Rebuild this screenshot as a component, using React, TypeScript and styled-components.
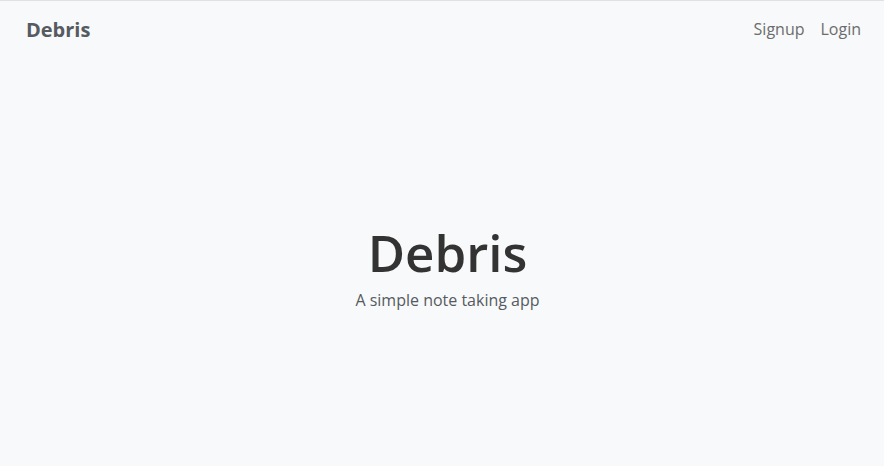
import React from "react";
import styled, { createGlobalStyle } from "styled-components";

const Global = createGlobalStyle`
  html, body { margin: 0; padding: 0; }
  body {
    background: #f8f9fa;
    font-family: "Open Sans", "Liberation Sans", sans-serif;
    color: #343a40;
  }
`;

const Page = styled.div`
  min-height: 466px;
  display: flex;
  flex-direction: column;
  border-top: 1px solid #dee2e6;
  box-sizing: border-box;
`;

const NavBar = styled.nav`
  display: flex;
  align-items: center;
  justify-content: space-between;
  height: 56px;
  padding: 0 23px 0 26px;
`;

const Brand = styled.a`
  font-size: 20px;
  font-weight: 700;
  color: #555b61;
  text-decoration: none;
`;

const NavLinks = styled.div`
  display: flex;
  gap: 16px;
`;

const NavLink = styled.a`
  font-size: 16px;
  color: #6c6c6c;
  text-decoration: none;
`;

const Hero = styled.main`
  flex: 1;
  display: flex;
  flex-direction: column;
  align-items: center;
  justify-content: center;
  padding: 10px 0 0 11px;
`;

const Title = styled.h1`
  margin: 0 0 6px;
  font-size: 51px;
  font-weight: 600;
  line-height: 1.2;
  color: #333;
`;

const Subtitle = styled.p`
  margin: 0;
  font-size: 16px;
  color: #555b61;
`;

export default function App() {
  return (
    <>
      <Global />
      <Page>
        <NavBar>
          <Brand href="#">Debris</Brand>
          <NavLinks>
            <NavLink href="#">Signup</NavLink>
            <NavLink href="#">Login</NavLink>
          </NavLinks>
        </NavBar>
        <Hero>
          <Title>Debris</Title>
          <Subtitle>A simple note taking app</Subtitle>
        </Hero>
      </Page>
    </>
  );
}
